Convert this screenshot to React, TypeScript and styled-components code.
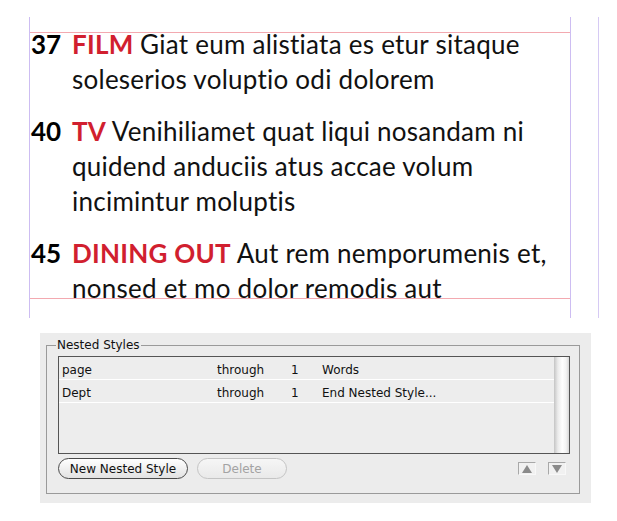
import React from 'react';
import styled, { createGlobalStyle } from 'styled-components';

const GlobalStyle = createGlobalStyle`
  body {
    margin: 0;
    background: #ffffff;
  }
`;

const Page = styled.div`
  width: 617px;
  height: 521px;
  padding-top: 17px;
  box-sizing: border-box;
`;

const Spread = styled.div`
  display: flex;
  margin-left: 29px;
  gap: 27px;
`;

const Column = styled.div`
  width: 542px;
  height: 301px;
  box-sizing: border-box;
  border-left: 1px solid #cdbdf2;
  border-right: 1px solid #cdbdf2;
  padding-top: 15px;
`;

const Guide = styled.div`
  width: 0;
  height: 301px;
  border-left: 1px solid #d6caf4;
`;

const MarginBox = styled.div`
  height: 267px;
  box-sizing: border-box;
  border-top: 1px solid #f3a9b0;
  border-bottom: 1px solid #f3a9b0;
`;

const Story = styled.div`
  margin-top: -6px;
  font-family: Lato, 'Noto Sans', sans-serif;
  font-size: 26px;
  letter-spacing: 0.25px;
  font-variant-ligatures: none;
  line-height: 35px;
  color: #111111;
  display: flex;
  flex-direction: column;
  gap: 17px;
`;

const Entry = styled.div`
  display: grid;
  grid-template-columns: 42px 1fr;
`;

const Folio = styled.span`
  font-weight: 700;
  letter-spacing: 0;
  padding-left: 1px;
  color: #000000;
`;

const Body = styled.div`
  display: flex;
  flex-direction: column;
  white-space: nowrap;
`;

const Dept = styled.span`
  font-weight: 700;
  color: #d11f2f;
`;

const Panel = styled.div`
  width: 551px;
  height: 170px;
  margin: 15px 0 0 40px;
  box-sizing: border-box;
  background: #ececec;
  padding: 5px 11px 9px 6px;
  font-family: 'DejaVu Sans', 'Liberation Sans', sans-serif;
  font-size: 12px;
  color: #111111;
`;

const Group = styled.fieldset`
  margin: 0;
  height: 100%;
  box-sizing: border-box;
  border: 1px solid #9a9a9a;
  padding: 4px 9px 13px 11px;
  min-width: 0;
`;

const Legend = styled.legend`
  padding: 0 1px;
  margin-left: -2px;
  line-height: 14px;
`;

const List = styled.div`
  display: flex;
  height: 98px;
  box-sizing: border-box;
  border: 1px solid #555555;
  background: #ededed;
`;

const Rows = styled.div`
  flex: 1;
`;

const Row = styled.div`
  display: grid;
  grid-template-columns: 155px 74px 31px 1fr;
  height: 23px;
  box-sizing: border-box;
  padding: 3px 0 0 3px;
  align-items: center;
  border-bottom: 1px solid #ffffff;
`;

const Scroll = styled.div`
  width: 15px;
  background: linear-gradient(90deg, #c4c4c4 0%, #eaeaea 25%, #ffffff 55%, #f4f4f4 80%, #d8d8d8 100%);
`;

const Actions = styled.div`
  display: flex;
  align-items: center;
  gap: 9px;
  margin-top: 4px;
  padding-right: 4px;
`;

const Pill = styled.button<{ $disabled?: boolean }>`
  height: 21px;
  width: ${(p) => (p.$disabled ? '90px' : '130px')};
  box-sizing: border-box;
  padding: 0;
  border-radius: 11px;
  border: 1px solid ${(p) => (p.$disabled ? '#c4c4c4' : '#4a4a4a')};
  background: ${(p) =>
    p.$disabled
      ? 'linear-gradient(#f6f6f6, #e9e9e9)'
      : 'linear-gradient(#ffffff, #f0f0f0 50%, #e2e2e2)'};
  color: ${(p) => (p.$disabled ? '#a3a3a3' : '#111111')};
  font-family: inherit;
  font-size: 12px;
`;

const Arrows = styled.div`
  margin-left: auto;
  display: flex;
  gap: 12px;
`;

const ArrowBox = styled.div`
  width: 18px;
  height: 13px;
  box-sizing: border-box;
  border-top: 1px solid #a8a8a8;
  border-left: 1px solid #a8a8a8;
  border-right: 1px solid #f8f8f8;
  border-bottom: 1px solid #f8f8f8;
  background: #f1f1f1;
  display: flex;
  align-items: center;
  justify-content: center;
`;

const entries = [
  { folio: '37', dept: 'FILM', lines: ['Giat eum alistiata es etur sitaque', 'soleserios voluptio odi dolorem'] },
  {
    folio: '40',
    dept: 'TV',
    lines: ['Venihiliamet quat liqui nosandam ni', 'quidend anduciis atus accae volum', 'incimintur moluptis'],
  },
  { folio: '45', dept: 'DINING OUT', lines: ['Aut rem nemporumenis et,', 'nonsed et mo dolor remodis aut'] },
];

const styles = [
  { name: 'page', rule: 'through', count: '1', unit: 'Words' },
  { name: 'Dept', rule: 'through', count: '1', unit: 'End Nested Style...' },
];

const Arrow = ({ up }: { up?: boolean }) => (
  <svg width="10" height="8" viewBox="0 0 10 8">
    <polygon points={up ? '5,0 10,8 0,8' : '0,0 10,0 5,8'} fill="#8a8a8a" />
  </svg>
);

const App: React.FC = (): JSX.Element => {
  return (
    <Page>
      <GlobalStyle />
      <Spread>
        <Column>
          <MarginBox>
            <Story>
              {entries.map((entry) => (
                <Entry key={entry.folio}>
                  <Folio>{entry.folio}</Folio>
                  <Body>
                    {entry.lines.map((line, index) => (
                      <span key={line}>
                        {index === 0 && <Dept>{entry.dept} </Dept>}
                        {line}
                      </span>
                    ))}
                  </Body>
                </Entry>
              ))}
            </Story>
          </MarginBox>
        </Column>
        <Guide />
      </Spread>
      <Panel>
        <Group>
          <Legend>Nested Styles</Legend>
          <List>
            <Rows>
              {styles.map((s) => (
                <Row key={s.name}>
                  <span>{s.name}</span>
                  <span>{s.rule}</span>
                  <span>{s.count}</span>
                  <span>{s.unit}</span>
                </Row>
              ))}
            </Rows>
            <Scroll />
          </List>
          <Actions>
            <Pill>New Nested Style</Pill>
            <Pill $disabled>Delete</Pill>
            <Arrows>
              <ArrowBox>
                <Arrow up />
              </ArrowBox>
              <ArrowBox>
                <Arrow />
              </ArrowBox>
            </Arrows>
          </Actions>
        </Group>
      </Panel>
    </Page>
  );
};

export default App;
